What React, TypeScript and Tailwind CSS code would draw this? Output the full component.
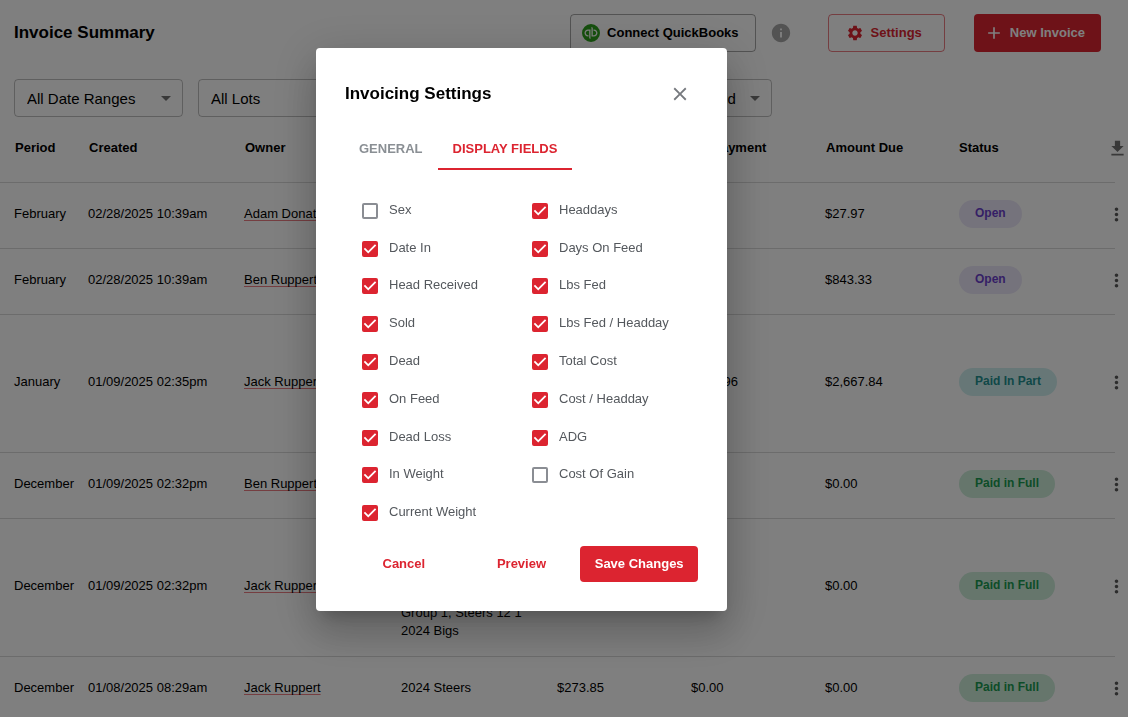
import React, { useState } from "react";
import { SiQuickbooks } from "react-icons/si";

const ROW_MENU = "M12 8c1.1 0 2-.9 2-2s-.9-2-2-2-2 .9-2 2 .9 2 2 2zm0 2c-1.1 0-2 .9-2 2s.9 2 2 2 2-.9 2-2-.9-2-2-2zm0 6c-1.1 0-2 .9-2 2s.9 2 2 2 2-.9 2-2-.9-2-2-2z";
const GEAR = "M19.14 12.94c.04-.3.06-.61.06-.94 0-.32-.02-.64-.07-.94l2.03-1.58c.18-.14.23-.41.12-.61l-1.92-3.32c-.12-.22-.37-.29-.59-.22l-2.39.96c-.5-.38-1.03-.7-1.62-.94l-.36-2.54c-.04-.24-.24-.41-.48-.41h-3.84c-.24 0-.43.17-.47.41l-.36 2.54c-.59.24-1.13.57-1.62.94l-2.39-.96c-.22-.08-.47 0-.59.22L2.74 8.87c-.12.21-.08.47.12.61l2.03 1.58c-.05.3-.09.63-.09.94s.02.64.07.94l-2.03 1.58c-.18.14-.23.41-.12.61l1.92 3.32c.12.22.37.29.59.22l2.39-.96c.5.38 1.03.7 1.62.94l.36 2.54c.05.24.24.41.48.41h3.84c.24 0 .44-.17.47-.41l.36-2.54c.59-.24 1.13-.56 1.62-.94l2.39.96c.22.08.47 0 .59-.22l1.92-3.32c.12-.22.07-.47-.12-.61l-2.01-1.58zM12 15.6c-1.98 0-3.6-1.62-3.6-3.6s1.62-3.6 3.6-3.6 3.6 1.62 3.6 3.6-1.62 3.6-3.6 3.6z";
const PLUS = "M19 13h-6v6h-2v-6H5v-2h6V5h2v6h6v2z";
const INFO = "M12 2C6.48 2 2 6.48 2 12s4.48 10 10 10 10-4.48 10-10S17.52 2 12 2zm1 15h-2v-6h2v6zm0-8h-2V7h2v2z";
const DOWNLOAD = "M19 9h-4V3H9v6H5l7 7 7-7zM5 18v2h14v-2H5z";
const CARET = "M7 10l5 5 5-5z";
const CLOSE = "M19 6.41 17.59 5 12 10.59 6.41 5 5 6.41 10.59 12 5 17.59 6.41 19 12 13.41 17.59 19 19 17.59 13.41 12z";

function Icon({ d, className }: { d: string; className: string }) {
  return (
    <svg viewBox="0 0 24 24" fill="currentColor" aria-hidden="true" className={className}>
      <path d={d} />
    </svg>
  );
}

function Filter({ label, options, className }: { label: string; options: string[]; className: string }) {
  return (
    <div className={`relative ${className}`}>
      <select aria-label={label} className="h-[38px] w-full appearance-none rounded border border-black/25 bg-transparent pl-3 pr-8 pt-0.5 text-[15px] text-black">
        {options.map((option) => (
          <option key={option}>{option}</option>
        ))}
      </select>
      <Icon d={CARET} className="pointer-events-none absolute right-[5px] top-[7px] size-6 text-black/55" />
    </div>
  );
}

type Status = "Open" | "Paid In Part" | "Paid in Full";

const STATUS_STYLES: Record<Status, string> = {
  Open: "bg-[#ebe7f8] text-[#6a3fcc]",
  "Paid In Part": "bg-[#cfefef] text-[#22908f]",
  "Paid in Full": "bg-[#ccecd9] text-[#1a9a50]",
};

interface Invoice {
  period: string;
  created: string;
  owner: string;
  lots: string[];
  total: string;
  payment: string;
  due: string;
  status: Status;
}

const INVOICES: Invoice[] = [
  { period: "February", created: "02/28/2025 10:39am", owner: "Adam Donath", lots: ["2025 Heifers"], total: "$27.97", payment: "$0.00", due: "$27.97", status: "Open" },
  { period: "February", created: "02/28/2025 10:39am", owner: "Ben Ruppert", lots: ["2025 Steers"], total: "$843.33", payment: "$0.00", due: "$843.33", status: "Open" },
  { period: "January", created: "01/09/2025 02:35pm", owner: "Jack Ruppert", lots: ["2024 Steers", "2024 Heifers", "Group 1", "Group 2", "Steers 12 1", "2024 Bigs"], total: "$3,267.80", payment: "$599.96", due: "$2,667.84", status: "Paid In Part" },
  { period: "December", created: "01/09/2025 02:32pm", owner: "Ben Ruppert", lots: ["2024 Steers"], total: "$512.40", payment: "$0.00", due: "$0.00", status: "Paid in Full" },
  { period: "December", created: "01/09/2025 02:32pm", owner: "Jack Ruppert", lots: ["2024 Steers", "2024 Heifers", "Group 2", "Group 3", "Group 1, Steers 12 1", "2024 Bigs"], total: "$1,204.10", payment: "$0.00", due: "$0.00", status: "Paid in Full" },
  { period: "December", created: "01/08/2025 08:29am", owner: "Jack Ruppert", lots: ["2024 Steers"], total: "$273.85", payment: "$0.00", due: "$0.00", status: "Paid in Full" },
];

const FIELDS: [string, boolean][] = [
  ["Sex", false],
  ["Date In", true],
  ["Head Received", true],
  ["Sold", true],
  ["Dead", true],
  ["On Feed", true],
  ["Dead Loss", true],
  ["In Weight", true],
  ["Current Weight", true],
  ["Headdays", true],
  ["Days On Feed", true],
  ["Lbs Fed", true],
  ["Lbs Fed / Headday", true],
  ["Total Cost", true],
  ["Cost / Headday", true],
  ["ADG", true],
  ["Cost Of Gain", false],
];

function InvoiceTable() {
  const cell = "border-b border-black/15 px-0 pt-0 pb-[3px]";
  const head = "border-b border-black/15 pr-0 pt-0 pb-[3px] pl-px";
  return (
    <div className="pr-[13px]">
      <table className="w-full table-fixed border-separate border-spacing-0 text-left text-[13px] leading-[18px]">
        <colgroup>
          <col className="w-[88px]" />
          <col className="w-[156px]" />
          <col className="w-[157px]" />
          <col className="w-[156px]" />
          <col className="w-[134px]" />
          <col className="w-[134px]" />
          <col className="w-[134px]" />
          <col />
          <col className="w-6" />
        </colgroup>
        <thead>
          <tr className="h-[66px]">
            <th className="border-b border-black/15 pb-[3px] pl-[15px] pr-0 pt-0">Period</th>
            <th className={head}>Created</th>
            <th className={head}>Owner</th>
            <th className={head}>Lots</th>
            <th className={head}>Total</th>
            <th className={head}>Prepayment</th>
            <th className={head}>Amount Due</th>
            <th className={cell}>Status</th>
            <th className={cell}>
              <button aria-label="Download" className="-mr-[14px] ml-[14px] flex size-6 items-center justify-center text-black/55">
                <Icon d={DOWNLOAD} className="size-[21px]" />
              </button>
            </th>
          </tr>
        </thead>
        <tbody>
          {INVOICES.map((invoice, index) => (
            <tr key={index} className="h-[66px]">
              <td className="border-b border-black/15 pb-[3px] pl-[14px] pr-0 pt-0">{invoice.period}</td>
              <td className={cell}>{invoice.created}</td>
              <td className={cell}>
                <a href="#owner" className="underline decoration-[#dc2430]/60 decoration-1 underline-offset-2 [text-decoration-skip-ink:none]">{invoice.owner}</a>
              </td>
              <td className="border-b border-black/15 px-0 pb-[16px] pt-[13px]">
                {invoice.lots.map((lot) => (
                  <div key={lot}>{lot}</div>
                ))}
              </td>
              <td className={cell}>{invoice.total}</td>
              <td className={cell}>{invoice.payment}</td>
              <td className={cell}>{invoice.due}</td>
              <td className={cell}>
                <span className={`inline-block rounded-full px-4 pb-[6px] pt-1 align-middle text-xs leading-[18px] font-bold ${STATUS_STYLES[invoice.status]}`}>
                  {invoice.status}
                </span>
              </td>
              <td className={cell}>
                <button aria-label="Invoice actions" className="-mr-[13px] ml-[13px] flex size-6 items-center justify-center text-black/65">
                  <Icon d={ROW_MENU} className="size-[21px]" />
                </button>
              </td>
            </tr>
          ))}
        </tbody>
      </table>
    </div>
  );
}

function Field({ label, initial }: { label: string; initial: boolean }) {
  const [checked, setChecked] = useState(initial);
  return (
    <label className="flex items-center gap-[11px]">
      <span className="relative block size-4 shrink-0">
        <input
          type="checkbox"
          checked={checked}
          onChange={(event) => setChecked(event.target.checked)}
          className="block size-4 appearance-none rounded-xs border-2 border-[#8a8d93] checked:border-[#dc2430] checked:bg-[#dc2430]"
        />
        {checked && (
          <svg viewBox="3 3 18 18" aria-hidden="true" className="pointer-events-none absolute inset-0 size-4">
            <path fill="#fff" d="M10 17l-5-5 1.410-1.410L10 14.170l7.590-7.590L19 8z" />
          </svg>
        )}
      </span>
      <span className="pb-[2px] leading-4">{label}</span>
    </label>
  );
}

function SettingsDialog() {
  return (
    <div className="fixed inset-0 flex items-start justify-center bg-black/50 pr-[85px] pt-12">
      <div
        role="dialog"
        aria-labelledby="settings-title"
        className="w-full max-w-[411px] rounded bg-white p-[29px] text-[13px] shadow-[0_11px_15px_-7px_rgba(0,0,0,0.2),0_24px_38px_3px_rgba(0,0,0,0.14),0_9px_46px_8px_rgba(0,0,0,0.12)]"
      >
        <div className="flex h-[34px] items-center justify-between pr-[7px]">
          <h2 id="settings-title" className="text-[17px] font-bold text-black">Invoicing Settings</h2>
          <button aria-label="Close" className="text-[#76797e]">
            <Icon d={CLOSE} className="size-[22px]" />
          </button>
        </div>
        <div role="tablist" className="-ml-px mt-4 flex font-bold">
          <button role="tab" aria-selected="false" className="h-[43px] border-b-2 border-transparent px-[15px] pt-[2px] text-[#8a8f94]">GENERAL</button>
          <button role="tab" aria-selected="true" className="h-[43px] border-b-2 border-[#dc2430] px-[15px] pt-[2px] text-[#dc2430]">DISPLAY FIELDS</button>
        </div>
        <div className="mt-[22px] grid h-[340px] grid-flow-col grid-cols-[170px_1fr] grid-rows-9 pl-[17px] text-[#54585d]">
          {FIELDS.map(([label, initial]) => (
            <Field key={label} label={label} initial={initial} />
          ))}
        </div>
        <div className="mt-[14px] grid grid-cols-3 font-bold text-[#dc2430]">
          <button className="h-9">Cancel</button>
          <button className="h-9">Preview</button>
          <button className="h-9 rounded bg-[#dc2430] text-white">Save Changes</button>
        </div>
      </div>
    </div>
  );
}

export default function App() {
  return (
    <div className="h-screen overflow-hidden bg-white font-['Liberation_Sans',Arial,sans-serif] text-black">
      <header className="flex items-center justify-between pl-[14px] pr-[27px] pt-[14px]">
        <h1 className="text-[17px] font-bold">Invoice Summary</h1>
        <div className="flex items-center text-[13px] font-bold">
          <button className="flex h-[38px] items-center gap-[7px] rounded border border-black/35 pl-[11px] pr-4">
            <SiQuickbooks aria-hidden="true" className="size-[18px] shrink-0 text-[#2ca01c]" />
            Connect QuickBooks
          </button>
          <Icon d={INFO} className="ml-[14px] size-[22px] text-black/35" />
          <button className="ml-9 flex h-[38px] items-center gap-[7px] rounded border border-[#dc2430]/60 pl-[17px] pr-[22px] text-[#dc2430]">
            <Icon d={GEAR} className="size-[18px]" />
            Settings
          </button>
          <button className="ml-[29px] flex h-[38px] items-center gap-[6px] rounded bg-[#dc2430] pl-[10px] pr-4 text-white">
            <Icon d={PLUS} className="size-5" />
            New Invoice
          </button>
        </div>
      </header>
      <div className="mt-[27px] flex gap-[15px] pl-[14px]">
        <Filter label="Date range" options={["All Date Ranges"]} className="w-[169px]" />
        <Filter label="Lot" options={["All Lots"]} className="w-[192px]" />
        <Filter label="Owner" options={["All Owners"]} className="w-[192px]" />
        <Filter label="Payment" options={["Paid and Unpaid"]} className="w-[160px]" />
      </div>
      <InvoiceTable />
      <SettingsDialog />
    </div>
  );
}
